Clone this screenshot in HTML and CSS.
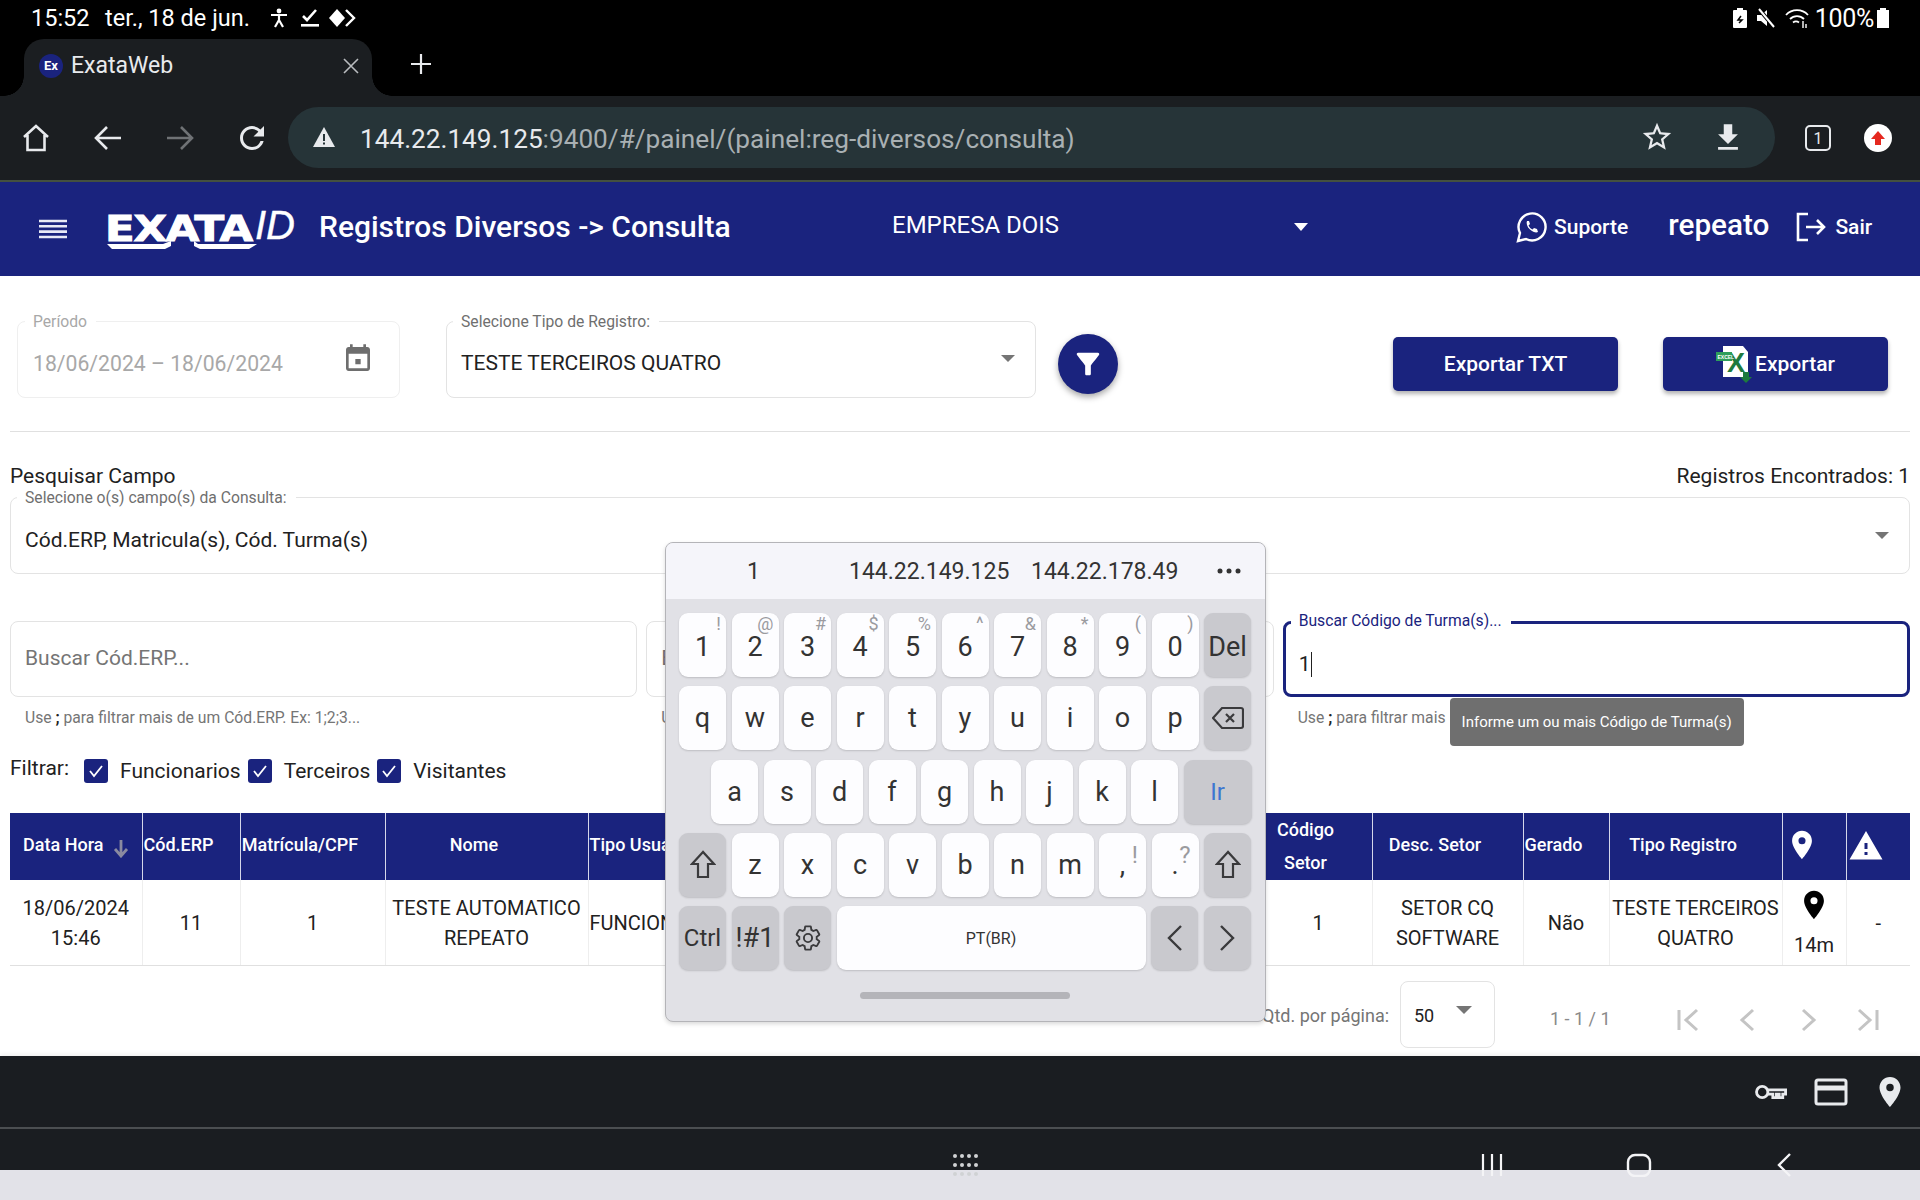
FILE: index.html

```html
<!DOCTYPE html>
<html>
<head>
    <title>ExataWeb</title>
    <link rel="stylesheet" href="styles.css">
</head>
<body>
    <div class="status">
        <span class="clock">15:52</span>
        <span class="date">ter., 18 de jun.</span>
        <svg class="st-first" width="18" height="22" viewBox="0 0 18 22"><circle cx="9" cy="4" r="2.4" fill="#fff"/><path d="M1 8h16M9 8v6M9 13l-4 7M9 13l4 7" stroke="#fff" stroke-width="2.2" fill="none"/></svg>
        <svg class="st-icon" width="22" height="22" viewBox="0 0 22 22"><path d="M4 9l4 4 9-10" stroke="#fff" stroke-width="2.6" fill="none"/><rect x="2" y="17" width="18" height="2.6" fill="#fff"/></svg>
        <svg class="st-diamonds" width="28" height="20" viewBox="0 0 28 20"><path d="M9 1l8 9-8 9-8-9z" fill="#fff"/><path d="M18 2l8 8-8 8" stroke="#fff" stroke-width="2.4" fill="none"/></svg>
        <div class="status-right">
            <svg width="14" height="20" viewBox="0 0 14 20"><path d="M4 0h6v2h3a1 1 0 0 1 1 1v16a1 1 0 0 1-1 1H1a1 1 0 0 1-1-1V3a1 1 0 0 1 1-1h3z" fill="#fff"/><path d="M8 8L5 12h4l-3 3" stroke="#000" stroke-width="1.5" fill="none"/></svg>
            <svg width="20" height="22" viewBox="0 0 20 22"><path d="M1 8h4l6-5v16l-6-5H1z" fill="#fff"/><path d="M3 2l15 18" stroke="#000" stroke-width="4"/><path d="M3 2l15 18" stroke="#fff" stroke-width="2"/></svg>
            <svg width="24" height="22" viewBox="0 0 24 22" fill="none" stroke="#fff" stroke-width="1.8"><path d="M1 8a15 15 0 0 1 22 0M5 12a10 10 0 0 1 14 0M8 15.5a5 5 0 0 1 6 0"/><path d="M18 14v7M21 17v4" stroke-width="1.4"/></svg>
            <span class="battery-text">100%</span>
            <svg class="battery" width="12" height="20" viewBox="0 0 12 20"><path d="M3 0h6v2h3v18H0V2h3z" fill="#fff"/></svg>
        </div>
    </div>

    <div class="tabstrip">
        <div class="tab">
            <span class="favicon">Ex</span>
            <span class="tab-title">ExataWeb</span>
            <svg class="tab-close" width="18" height="18" viewBox="0 0 18 18"><path d="M2 2l14 14M16 2L2 16" stroke="#b9bcbf" stroke-width="1.6"/></svg>
        </div>
        <svg class="tab-plus" width="22" height="22" viewBox="0 0 22 22"><path d="M11 1v20M1 11h20" stroke="#e8eaed" stroke-width="2.2"/></svg>
    </div>

    <div class="toolbar">
        <svg class="tool home" width="30" height="30" viewBox="0 0 30 30" fill="none" stroke="#e8eaed" stroke-width="2.6"><path d="M3 14L15 3l12 11M6.5 12v15h17V12"/></svg>
        <svg class="tool back" width="30" height="30" viewBox="0 0 30 30" fill="none" stroke="#e8eaed" stroke-width="2.6"><path d="M28 15H4M14 4L3 15l11 11"/></svg>
        <svg class="tool fwd" width="30" height="30" viewBox="0 0 30 30" fill="none" stroke="#6f7275" stroke-width="2.6"><path d="M2 15h24M16 4l11 11-11 11"/></svg>
        <svg class="tool reload" width="36" height="36" viewBox="0 0 24 24" fill="#e8eaed"><path d="M17.65 6.35A7.958 7.958 0 0 0 12 4c-4.42 0-7.99 3.58-7.99 8s3.57 8 7.99 8c3.73 0 6.84-2.55 7.73-6h-2.08A5.99 5.99 0 0 1 12 18c-3.31 0-6-2.69-6-6s2.69-6 6-6c1.66 0 3.14.69 4.22 1.78L13 11h7V4l-2.35 2.35z"/></svg>
        <div class="urlbar">
            <svg width="24" height="22" viewBox="0 0 24 22"><path d="M1 21L12 1l11 20z" fill="#e8eaed"/><path d="M12 8v7M12 16.5v2" stroke="#263438" stroke-width="2"/></svg>
            <div class="url"><span class="url-host">144.22.149.125</span>:9400/#/painel/(painel:reg-diversos/consulta)</div>
            <svg class="url-star" width="34" height="34" viewBox="0 0 24 24" fill="#e8eaed"><path d="M22 9.24l-7.19-.62L12 2 9.19 8.63 2 9.24l5.46 4.73L5.82 21 12 17.27 18.18 21l-1.63-7.03L22 9.24zM12 15.4l-3.76 2.27 1-4.28-3.32-2.88 4.38-.38L12 6.1l1.71 4.04 4.38.38-3.32 2.88 1 4.28L12 15.4z"/></svg>
            <svg class="url-down" width="34" height="34" viewBox="0 0 24 24" fill="#e8eaed"><path d="M19 10h-4V3H9v7H5l7 7 7-7zM5 19v2h14v-2H5z"/></svg>
        </div>
        <span class="tabcount">1</span>
        <span class="update"><svg width="18" height="18" viewBox="0 0 18 18"><path d="M9 2l7 8h-4v6H6v-6H2z" fill="#e5281f"/></svg></span>
    </div>

    <header class="appbar">
        <svg class="burger" width="28" height="20" viewBox="0 0 28 20"><path d="M0 2h28M0 7.300h28M0 12.600h28M0 18h28" stroke="#e8eaf6" stroke-width="2.600"/></svg>
        <div class="logo">
            <span class="logo-main">EXATA</span><span class="logo-id">ID</span>
            <svg class="logo-swoosh" width="150" height="14" viewBox="0 0 150 14"><path d="M0 3h56L64 0v5l-6 3H5zM87 0l4 3h59l-8 5H93l-6-3z" fill="#fff"/></svg>
        </div>
        <div class="page-title">Registros Diversos -&gt; Consulta</div>
        <div class="company">EMPRESA DOIS</div>
        <span class="caret-white"></span>
        <svg class="wa" width="32" height="32" viewBox="0 0 32 32" fill="none" stroke="#fff" stroke-width="2.400"><path d="M2 30l2-8A13.500 13.500 0 1 1 10 28z"/><path d="M11 10c-1 2 0 6 3 8.500s6 3.500 8 2.500l-1-3-3-1-1.500 1.500c-2-1-3-2-4-4l1.500-1.500-1-3z" fill="#fff" stroke="none"/></svg>
        <span class="support">Suporte</span>
        <span class="user">repeato</span>
        <svg class="exit" width="32" height="32" viewBox="0 0 32 32" fill="none" stroke="#fff" stroke-width="2.600"><path d="M13 3H3v26h10M11 16h18M22 9l7 7-7 7"/></svg>
        <span class="logout">Sair</span>
    </header>

    <main class="content">
        <div class="filters">
            <div class="field field-period">
                <label class="field-label label-muted">Período</label>
                <span class="value-muted">18/06/2024 – 18/06/2024</span>
                <svg class="calendar" width="32" height="32" viewBox="0 0 24 24" fill="#6e6e6e"><path d="M14 12h-4v4h4v-4zM16 1v2H8V1H6v2H5c-1.110 0-1.990.9-1.990 2L3 19c0 1.100.89 2 2 2h14c1.100 0 2-.9 2-2V5c0-1.100-.9-2-2-2h-1V1h-2zm3 18H5V8h14v11z"/></svg>
            </div>
            <div class="field field-type">
                <label class="field-label">Selecione Tipo de Registro:</label>
                <span class="value">TESTE TERCEIROS QUATRO</span>
                <span class="caret"></span>
            </div>
            <button class="fab"><svg width="34" height="34" viewBox="0 0 24 24" fill="#fff"><path d="M4.250 5.610C6.270 8.200 10 13 10 13v6c0 .55.45 1 1 1h2c.55 0 1-.45 1-1v-6s3.720-4.800 5.740-7.390A.998.998 0 0 0 18.950 4H5.040c-.83 0-1.300.95-.79 1.610z"/></svg></button>
            <div class="exports">
                <button class="btn">Exportar TXT</button>
                <button class="btn">
                    <svg class="excel" width="38" height="38" viewBox="0 0 38 38"><path d="M7 1h20l5 6v25H7z" fill="#fff"/><text x="11" y="27" class="excel-x">X</text><rect x="0" y="7" width="16" height="9" fill="#2e9e5b"/><text x="1.500" y="14" class="excel-tag">EXCEL</text><path d="M27 27h6v5h3l-6 6-6-6h3z" fill="#1d7a3e"/></svg>
                    Exportar
                </button>
            </div>
        </div>

        <div class="divider"></div>

        <div class="search-head">
            <span>Pesquisar Campo</span>
            <span>Registros Encontrados: 1</span>
        </div>
        <div class="field field-fields">
            <label class="field-label">Selecione o(s) campo(s) da Consulta:</label>
            <span class="value">Cód.ERP, Matricula(s), Cód. Turma(s)</span>
            <span class="caret"></span>
        </div>

        <div class="search-row">
            <div class="search-col">
                <div class="field field-search"><span class="placeholder">Buscar Cód.ERP...</span></div>
                <p class="hint">Use <b>;</b> para filtrar mais de um Cód.ERP. Ex: 1;2;3...</p>
            </div>
            <div class="search-col">
                <div class="field field-search"><span class="placeholder">Buscar Matrícula(s)...</span></div>
                <p class="hint">Use <b>;</b> para filtrar mais de uma Matrícula</p>
            </div>
            <div class="search-col tip-anchor">
                <div class="field field-search field-focus">
                    <label class="field-label label-focus">Buscar Código de Turma(s)...</label>
                    <span class="typed">1</span><span class="cursor"></span>
                </div>
                <p class="hint">Use <b>;</b> para filtrar mais</p>
                <div class="tooltip">Informe um ou mais Código de Turma(s)</div>
            </div>
        </div>

        <div class="filter-row">
            <span class="filter-title">Filtrar:</span>
            <span class="check"><svg width="24" height="24" viewBox="0 0 24 24"><path d="M6 12l4 5 8-10" stroke="#fff" stroke-width="1.800" fill="none"/></svg></span>
            <span class="check-label">Funcionarios</span>
            <span class="check"><svg width="24" height="24" viewBox="0 0 24 24"><path d="M6 12l4 5 8-10" stroke="#fff" stroke-width="1.800" fill="none"/></svg></span>
            <span class="check-label">Terceiros</span>
            <span class="check"><svg width="24" height="24" viewBox="0 0 24 24"><path d="M6 12l4 5 8-10" stroke="#fff" stroke-width="1.800" fill="none"/></svg></span>
            <span class="check-label">Visitantes</span>
        </div>

        <table class="grid">
            <colgroup>
                <col class="c-date"><col class="c-erp"><col class="c-mat"><col class="c-name"><col class="c-user"><col class="c-sector"><col class="c-desc"><col class="c-gen"><col class="c-type"><col class="c-pin"><col class="c-warn">
            </colgroup>
            <thead>
                <tr>
                    <th class="th-sort">Data Hora <svg class="sort" width="16" height="20" viewBox="0 0 16 20"><path d="M8 2v15M2 11l6 7 6-7" stroke="#8a8aa0" stroke-width="2.800" fill="none"/></svg></th>
                    <th>Cód.ERP</th>
                    <th>Matrícula/CPF</th>
                    <th>Nome</th>
                    <th class="th-left">Tipo Usuário</th>
                    <th class="th-two">Código Setor</th>
                    <th>Desc. Setor</th>
                    <th>Gerado</th>
                    <th>Tipo Registro</th>
                    <th><svg width="34" height="34" viewBox="0 0 24 24" fill="#fff"><path d="M12 2C8.130 2 5 5.130 5 9c0 5.250 7 13 7 13s7-7.750 7-13c0-3.870-3.130-7-7-7zm0 9.500a2.500 2.500 0 0 1 0-5 2.500 2.500 0 0 1 0 5z"/></svg></th>
                    <th><svg width="36" height="36" viewBox="0 0 24 24" fill="#fff"><path d="M1 21h22L12 2 1 21zm12-3h-2v-2h2v2zm0-4h-2v-4h2v4z"/></svg></th>
                </tr>
            </thead>
            <tbody>
                <tr>
                    <td>18/06/2024 15:46</td>
                    <td>11</td>
                    <td>1</td>
                    <td>TESTE AUTOMATICO REPEATO</td>
                    <td class="td-left">FUNCIONARIO</td>
                    <td>1</td>
                    <td>SETOR CQ SOFTWARE</td>
                    <td>Não</td>
                    <td>TESTE TERCEIROS QUATRO</td>
                    <td class="td-pin"><svg width="34" height="34" viewBox="0 0 24 24" fill="#000"><path d="M12 2C8.130 2 5 5.130 5 9c0 5.250 7 13 7 13s7-7.750 7-13c0-3.870-3.130-7-7-7zm0 9.500a2.500 2.500 0 0 1 0-5 2.500 2.500 0 0 1 0 5z"/></svg><div>14m</div></td>
                    <td>-</td>
                </tr>
            </tbody>
        </table>

        <div class="pager">
            <span class="pager-label">Qtd. por página:</span>
            <div class="pager-select">50<span class="caret caret-pager"></span></div>
            <span class="pager-range">1 - 1 / 1</span>
            <svg class="pager-first" width="28" height="28" viewBox="0 0 28 28" fill="none" stroke="#c4c4c4" stroke-width="3"><path d="M5 4v20M23 4L12 14l11 10"/></svg>
            <svg class="pager-btn" width="28" height="28" viewBox="0 0 28 28" fill="none" stroke="#c4c4c4" stroke-width="3"><path d="M19 4L8 14l11 10"/></svg>
            <svg class="pager-btn" width="28" height="28" viewBox="0 0 28 28" fill="none" stroke="#c4c4c4" stroke-width="3"><path d="M9 4l11 10L9 24"/></svg>
            <svg class="pager-btn" width="28" height="28" viewBox="0 0 28 28" fill="none" stroke="#c4c4c4" stroke-width="3"><path d="M5 4l11 10L5 24M23 4v20"/></svg>
        </div>
    </main>

    <div class="autofill">
        <svg width="34" height="34" viewBox="0 0 24 24" fill="none" stroke="#e8eaed" stroke-width="2"><circle cx="6.500" cy="12" r="4"/><path d="M10.500 10.500H23v3h-2v2.500h-2.500v-2.500h-2V16h-2.500v-2.500h-3.500"/></svg>
        <svg class="af-card" width="34" height="30" viewBox="0 0 34 30" fill="none" stroke="#e8eaed" stroke-width="3"><rect x="2" y="3" width="30" height="24" rx="2"/><path d="M2 11h30" stroke-width="5"/></svg>
        <svg class="af-pin" width="36" height="36" viewBox="0 0 24 24" fill="#e8eaed"><path d="M12 2C8.130 2 5 5.130 5 9c0 5.250 7 13 7 13s7-7.750 7-13c0-3.870-3.130-7-7-7zm0 9.500a2.500 2.500 0 0 1 0-5 2.500 2.500 0 0 1 0 5z"/></svg>
    </div>

    <div class="navbar">
        <svg class="nav-dots" width="26" height="24" viewBox="0 0 26 24" fill="#d0d2d4"><circle cx="3" cy="3" r="2"/><circle cx="10" cy="3" r="2"/><circle cx="17" cy="3" r="2"/><circle cx="24" cy="3" r="2"/><circle cx="3" cy="12" r="2"/><circle cx="10" cy="12" r="2"/><circle cx="17" cy="12" r="2"/><circle cx="24" cy="12" r="2"/><circle cx="3" cy="21" r="2"/><circle cx="10" cy="21" r="2"/><circle cx="17" cy="21" r="2"/><circle cx="24" cy="21" r="2"/></svg>
        <svg class="nav-recent" width="24" height="24" viewBox="0 0 24 24" stroke="#f4f4f6" stroke-width="2.200"><path d="M3 1v22M12 1v22M21 1v22"/></svg>
        <svg class="nav-home" width="26" height="24" viewBox="0 0 26 24" fill="none" stroke="#f4f4f6" stroke-width="2.400"><rect x="2" y="2" width="22" height="21" rx="7"/></svg>
        <svg class="nav-back" width="16" height="24" viewBox="0 0 16 24" fill="none" stroke="#f4f4f6" stroke-width="2.400"><path d="M14 1L3 12l11 11"/></svg>
    </div>

    <div class="keyboard">
        <div class="suggest">
            <span class="sg-one">1</span>
            <span class="sg-two">144.22.149.125</span>
            <span class="sg-three">144.22.178.49</span>
            <svg class="sg-more" width="24" height="6" viewBox="0 0 24 6" fill="#333"><circle cx="3" cy="3" r="2.500"/><circle cx="12" cy="3" r="2.500"/><circle cx="21" cy="3" r="2.500"/></svg>
        </div>
        <div class="keys">
            <div class="kb-row kb-row-num">
                <div class="key">1<span class="alt">!</span></div>
                <div class="key">2<span class="alt">@</span></div>
                <div class="key">3<span class="alt">#</span></div>
                <div class="key">4<span class="alt">$</span></div>
                <div class="key">5<span class="alt">%</span></div>
                <div class="key">6<span class="alt">^</span></div>
                <div class="key">7<span class="alt">&amp;</span></div>
                <div class="key">8<span class="alt">*</span></div>
                <div class="key">9<span class="alt">(</span></div>
                <div class="key">0<span class="alt">)</span></div>
                <div class="key key-fn">Del</div>
            </div>
            <div class="kb-row">
                <div class="key">q</div><div class="key">w</div><div class="key">e</div><div class="key">r</div><div class="key">t</div><div class="key">y</div><div class="key">u</div><div class="key">i</div><div class="key">o</div><div class="key">p</div>
                <div class="key key-fn"><svg width="32" height="24" viewBox="0 0 32 24" fill="none" stroke="#3a3a3c" stroke-width="2.200"><path d="M10 2h19a2 2 0 0 1 2 2v16a2 2 0 0 1-2 2H10L1 12z"/><path d="M14 8l8 8M22 8l-8 8"/></svg></div>
            </div>
            <div class="kb-row kb-row-home">
                <div class="key">a</div><div class="key">s</div><div class="key">d</div><div class="key">f</div><div class="key">g</div><div class="key">h</div><div class="key">j</div><div class="key">k</div><div class="key">l</div>
                <div class="key key-fn key-go">Ir</div>
            </div>
            <div class="kb-row">
                <div class="key key-fn"><svg width="26" height="30" viewBox="0 0 26 30" fill="none" stroke="#3a3a3c" stroke-width="2.200"><path d="M13 2L2 14h6v13h10V14h6z"/></svg></div>
                <div class="key">z</div><div class="key">x</div><div class="key">c</div><div class="key">v</div><div class="key">b</div><div class="key">n</div><div class="key">m</div>
                <div class="key">,<span class="alt alt-big">!</span></div>
                <div class="key">.<span class="alt alt-big">?</span></div>
                <div class="key key-fn"><svg width="26" height="30" viewBox="0 0 26 30" fill="none" stroke="#3a3a3c" stroke-width="2.200"><path d="M13 2L2 14h6v13h10V14h6z"/></svg></div>
            </div>
            <div class="kb-row">
                <div class="key key-fn key-small">Ctrl</div>
                <div class="key key-fn">!#1</div>
                <div class="key key-fn"><svg width="28" height="28" viewBox="0 0 24 24" fill="none" stroke="#3a3a3c" stroke-width="1.600"><path d="M19.430 12.980c.04-.32.07-.64.07-.98s-.03-.66-.07-.98l2.110-1.650c.19-.15.24-.42.12-.64l-2-3.460c-.12-.22-.39-.3-.61-.22l-2.490 1c-.52-.4-1.080-.73-1.690-.98l-.38-2.650A.488.488 0 0 0 14 2h-4c-.25 0-.46.18-.49.42l-.38 2.650c-.61.25-1.170.59-1.690.98l-2.490-1c-.23-.09-.49 0-.61.22l-2 3.460c-.13.22-.07.49.12.64l2.110 1.650c-.04.32-.07.65-.07.98s.03.66.07.98l-2.110 1.650c-.19.15-.24.42-.12.64l2 3.460c.12.22.39.3.61.22l2.490-1c.52.4 1.080.73 1.690.98l.38 2.650c.03.24.24.42.49.42h4c.25 0 .46-.18.49-.42l.38-2.650c.61-.25 1.170-.59 1.690-.98l2.490 1c.23.09.49 0 .61-.22l2-3.460c.12-.22.07-.49-.12-.64l-2.110-1.650z"/><circle cx="12" cy="12" r="3.500"/></svg></div>
                <div class="key key-space">PT(BR)</div>
                <div class="key key-fn"><svg width="16" height="28" viewBox="0 0 16 28" fill="none" stroke="#3a3a3c" stroke-width="2.400"><path d="M14 2L2 14l12 12"/></svg></div>
                <div class="key key-fn"><svg width="16" height="28" viewBox="0 0 16 28" fill="none" stroke="#3a3a3c" stroke-width="2.400"><path d="M2 2l12 12L2 26"/></svg></div>
            </div>
            <div class="handle"></div>
        </div>
    </div>
</body>
</html>
```

FILE: styles.css

```css
* { box-sizing: border-box; }
html, body { margin: 0; height: 1200px; overflow: hidden; }
body { width: 1920px; display: flex; flex-direction: column; font-family: Roboto, "Liberation Sans", sans-serif; color: #212121; background: #fff; position: relative; }
button { font-family: inherit; border: none; cursor: pointer; }

/* android status bar */
.status { height: 39px; background: #000; color: #fff; display: flex; align-items: center; padding: 0 31px 3px 31px; font-size: 23.500px; flex: none; }
.clock { width: 74px; }
.date { width: 159px; }
.st-first { margin-left: 6px; }
.st-icon { margin-left: 11px; }
.st-diamonds { margin-left: 7px; }
.status-right { margin-left: auto; display: flex; align-items: center; gap: 9px; }
.battery-text { font-size: 25px; letter-spacing: -0.3px; margin-left: -3px; }
.battery { margin-left: -6px; }

/* browser chrome */
.tabstrip { height: 57px; background: #000; display: flex; align-items: flex-end; flex: none; padding-left: 24px; }
.tab { width: 348px; height: 57px; background: #1b1e21; border-radius: 20px 20px 0 0; display: flex; align-items: center; padding: 0 0 4px 15px; color: #e8eaed; font-size: 23px; position: relative; }
.tab::before, .tab::after { content: ""; position: absolute; bottom: 0; width: 20px; height: 20px; }
.tab::before { left: -20px; background: radial-gradient(circle at 0 0, #000 19.500px, #1b1e21 20px); }
.tab::after { right: -20px; background: radial-gradient(circle at 100% 0, #000 19.500px, #1b1e21 20px); }
.favicon { width: 24px; height: 24px; border-radius: 50%; background: #1a237e; color: #fff; font-size: 13px; font-weight: 700; display: flex; align-items: center; justify-content: center; }
.tab-title { margin-left: 8px; }
.tab-close { margin-left: auto; margin-right: 12px; }
.tab-plus { margin: 0 0 21px 38px; }
.toolbar { height: 86px; background: #1b1e21; border-bottom: 2px solid #44503f; display: flex; align-items: center; flex: none; padding-left: 21px; }
.back { margin-left: 42px; }
.fwd { margin-left: 42px; }
.reload { margin-left: 39px; }
.urlbar { width: 1487px; height: 61px; margin-left: 18px; margin-top: -2px; background: #263438; border-radius: 31px; display: flex; align-items: center; padding-left: 24px; }
.url { margin-left: 24px; margin-top: 4px; font-size: 26.200px; color: #a9b0b3; }
.url-host { color: #e8eaed; }
.url-star { margin-left: auto; margin-right: 37px; }
.url-down { margin-right: 30px; }
.tabcount { width: 26px; height: 26px; margin-left: 30px; border: 2.500px solid #e8eaed; border-radius: 5px; color: #e8eaed; font-size: 16px; display: flex; align-items: center; justify-content: center; }
.update { width: 28px; height: 28px; margin-left: 33px; background: #fff; border-radius: 50%; display: flex; align-items: center; justify-content: center; }

/* app header */
.appbar { height: 94px; background: #1a237e; color: #fff; display: flex; align-items: center; flex: none; padding: 0 0 4px 39px; }
.burger { margin-top: 3px; }
.logo { width: 190px; height: 50px; margin-left: 38px; position: relative; white-space: nowrap; }
.logo-main { display: inline-block; font-family: "DejaVu Sans", sans-serif; font-weight: 700; font-size: 35px; line-height: 50px; letter-spacing: -1px; transform: scaleX(1.240); transform-origin: left; width: 150px; -webkit-text-stroke: 1px #fff; }
.logo-id { font-family: "Liberation Sans", sans-serif; font-style: italic; font-size: 40px; line-height: 46px; vertical-align: 2px; -webkit-text-stroke: 0.4px #fff; }
.logo-swoosh { position: absolute; left: 2px; top: 39px; }
.page-title { margin-left: 24px; margin-top: -2px; font-size: 30px; font-weight: 500; width: 573px; }
.company { font-size: 24px; width: 402px; margin-top: -4px; }
.caret-white { width: 0; height: 0; border-left: 7px solid transparent; border-right: 7px solid transparent; border-top: 8px solid #fff; }
.wa { margin-left: 208px; }
.support { margin-left: 6px; font-size: 21px; font-weight: 500; }
.user { margin-left: 40px; font-size: 29.700px; font-weight: 500; margin-top: -5px; }
.exit { margin-left: 26px; }
.logout { margin-left: 8px; font-size: 21px; font-weight: 500; }

/* page content */
.content { flex: 1; padding: 45px 10px 0; overflow: hidden; }
.filters { display: flex; align-items: center; height: 76px; padding-left: 7px; }
.field { border: 1px solid #e3e3e3; border-radius: 8px; position: relative; display: flex; align-items: center; padding-left: 14px; height: 77px; }
.field-label { position: absolute; top: -10px; left: 6px; padding: 0 9px 0 8px; background: #fff; font-size: 15.700px; line-height: 20px; color: #6f6f6f; white-space: nowrap; }
.label-muted { color: #a8a8a8; left: 7px; }
.label-focus { color: #1a237e; top: -13px; left: 5px; }
.field-period { width: 383px; padding-left: 15px; border-color: #efefef; }
.value-muted { font-size: 21.200px; color: #a8a8a8; margin-top: 8px; }
.calendar { margin-left: auto; margin-right: 25px; }
.field-type { width: 590px; margin-left: 46px; }
.value { font-size: 21px; color: #212121; margin-top: 8px; }
.caret { width: 0; height: 0; border-left: 7px solid transparent; border-right: 7px solid transparent; border-top: 7px solid #757575; margin-left: auto; margin-right: 20px; margin-top: -1px; }
.fab { width: 60px; height: 60px; border-radius: 50%; background: #1a237e; margin-left: 22px; margin-top: 10px; display: flex; align-items: center; justify-content: center; box-shadow: 0 3px 6px rgba(0,0,0,.35); }
.exports { margin-left: auto; margin-right: 22px; margin-top: 10px; display: flex; gap: 45px; }
.btn { width: 225px; height: 54px; border-radius: 5px; background: #1a237e; color: #fff; font-size: 21px; font-weight: 500; display: flex; align-items: center; justify-content: center; padding-bottom: 2px; box-shadow: 0 3px 4px rgba(0,0,0,.3); }
.excel { margin-right: 1px; }
.excel-x { font-family: "Liberation Sans", sans-serif; font-weight: 700; font-size: 27px; fill: #1d7a3e; }
.excel-tag { font-family: "Liberation Sans", sans-serif; font-weight: 700; font-size: 5px; fill: #fff; }
.divider { border-top: 1px solid #e0e0e0; margin-top: 34px; }
.search-head { display: flex; justify-content: space-between; font-size: 21px; line-height: 24px; margin-top: 32px; }
.field-fields { margin-top: 9px; }
.search-row { display: flex; gap: 9px; margin-top: 47px; }
.search-col { flex: 1; min-width: 0; }
.field-search { height: 76px; }
.placeholder { font-size: 21px; color: #757575; margin-top: -2px; }
.field-focus { border: 3px solid #1a237e; padding-left: 13px; }
.typed { font-size: 21px; margin-top: 10px; }
.cursor { width: 1px; height: 25px; background: #212121; margin-left: 1px; margin-top: 10px; }
.hint { margin: 11px 0 0; padding-left: 15px; font-size: 15.700px; line-height: 20px; color: #757575; white-space: nowrap; }
.hint b { color: #212121; }
.tip-anchor { position: relative; }
.tooltip { position: absolute; left: 167px; top: 77px; width: 294px; height: 48px; background: #6f6f6f; border-radius: 4px; color: #fff; font-size: 15px; display: flex; align-items: center; justify-content: center; }
.filter-row { display: flex; align-items: center; height: 30px; margin-top: 28px; font-size: 21px; }
.filter-title { align-self: flex-start; line-height: 24px; width: 74px; }
.check { width: 24px; height: 24px; background: #1a237e; border-radius: 3px; }
.check svg { display: block; }
.check-label { margin: 0 7px 0 12px; }

/* table */
.grid { width: 1900px; margin-top: 27px; table-layout: fixed; border-collapse: collapse; }
.c-date { width: 132px; }
.c-erp { width: 98px; }
.c-mat { width: 145px; }
.c-name { width: 203px; }
.c-user { width: 676px; }
.c-sector { width: 108px; }
.c-desc { width: 151px; }
.c-gen { width: 86px; }
.c-type { width: 173px; }
.c-pin { width: 64px; }
.c-warn { width: 64px; }
.grid th { height: 67px; background: #1a237e; color: #fff; font-size: 18px; font-weight: 500; line-height: 33px; padding: 15px 26px 0 1px; vertical-align: top; text-align: center; border-right: 1px solid #d5d7ea; position: relative; }
.grid th.th-two { padding-top: 0; }
.grid th:last-child, .grid td:last-child { border-right: none; }
.grid th svg { display: block; margin: 0 auto; }
.grid th .sort { position: absolute; left: 103px; top: 25px; margin: 0; }
.th-sort { white-space: nowrap; }
.grid th.th-left { text-align: left; white-space: nowrap; }
.grid td { height: 85px; padding: 2px 1px 0; text-align: center; font-size: 20px; line-height: 30px; color: #212121; border-right: 1px solid #eee; border-bottom: 1px solid #e0e0e0; }
.grid td.td-left { text-align: left; padding-left: 1px; white-space: nowrap; }
.grid td.td-pin { line-height: 26px; padding-top: 2px; }
.td-pin svg { display: block; margin: 0 auto 10px; }

/* pagination */
.pager { display: flex; align-items: center; height: 67px; margin-top: 15px; padding-left: 1252px; }
.pager-label { font-size: 18px; color: #757575; width: 138px; padding-top: 3px; }
.pager-select { width: 95px; height: 67px; border: 1px solid #e3e3e3; border-radius: 8px; display: flex; align-items: center; padding: 2px 0 0 13px; font-size: 18px; }
.caret-pager { margin-left: 22px; margin-top: -10px; border-left-width: 8px; border-right-width: 8px; border-top-width: 8px; }
.pager-range { margin-left: 55px; font-size: 18px; color: #8a8a8a; width: 124px; padding-top: 8px; }
.pager-first { margin-top: 12px; }
.pager-btn { margin-left: 32px; margin-top: 12px; }

/* bottom bars */
.autofill { height: 73px; background: #1a1d21; border-bottom: 2px solid #4b4e51; flex: none; display: flex; align-items: center; justify-content: flex-end; padding-right: 12px; box-shadow: 0 -2px 4px rgba(0,0,0,.06); }
.af-card { margin-left: 27px; }
.af-pin { margin-left: 24px; }
.navbar { height: 71px; flex: none; display: flex; align-items: flex-start; padding: 24px 0 0 952px; background: linear-gradient(#1a1d21 41px, #e2e2e8 41px); }
.nav-recent { margin-left: 502px; }
.nav-home { margin-left: 122px; }
.nav-back { margin-left: 124px; }

/* on-screen keyboard */
.keyboard { position: absolute; left: 665px; top: 542px; width: 601px; height: 480px; border: 1px solid #b4b4b8; border-radius: 8px; overflow: hidden; background: #e1e1e6; box-shadow: 0 2px 4px rgba(0,0,0,.15); }
.suggest { height: 56px; background: #f5f5fa; display: flex; align-items: center; font-size: 23px; color: #333; }
.sg-one { margin-left: 81px; width: 102px; }
.sg-two { width: 182px; }
.sg-three { width: 173px; }
.sg-more { margin-left: 13px; }
.keys { padding: 14px 13px 0; }
.kb-row { display: flex; gap: 5.500px; margin-bottom: 9.300px; }
.kb-row-home { padding-left: 32px; }
.kb-row-num .key { padding-top: 4px; }
.key { width: 47px; height: 64px; background: #fdfdff; border-radius: 9px; box-shadow: 0 1px 2px rgba(0,0,0,.16); display: flex; align-items: center; justify-content: center; font-size: 27px; color: #333; position: relative; }
.key-fn { background: #c9c9ce; }
.key-small { font-size: 24px; }
.key-go { width: 68px; color: #3d76d1; font-size: 24px; }
.key-space { width: 309px; font-size: 16px; }
.alt { position: absolute; top: 1px; right: 5px; font-size: 18px; line-height: 20px; color: #9b9b9f; }
.alt-big { top: 8px; right: 8px; font-size: 24px; line-height: 28px; }
.handle { width: 210px; height: 7px; margin: 22px 0 0 181px; background: #b4b4b9; border-radius: 4px; }
```
